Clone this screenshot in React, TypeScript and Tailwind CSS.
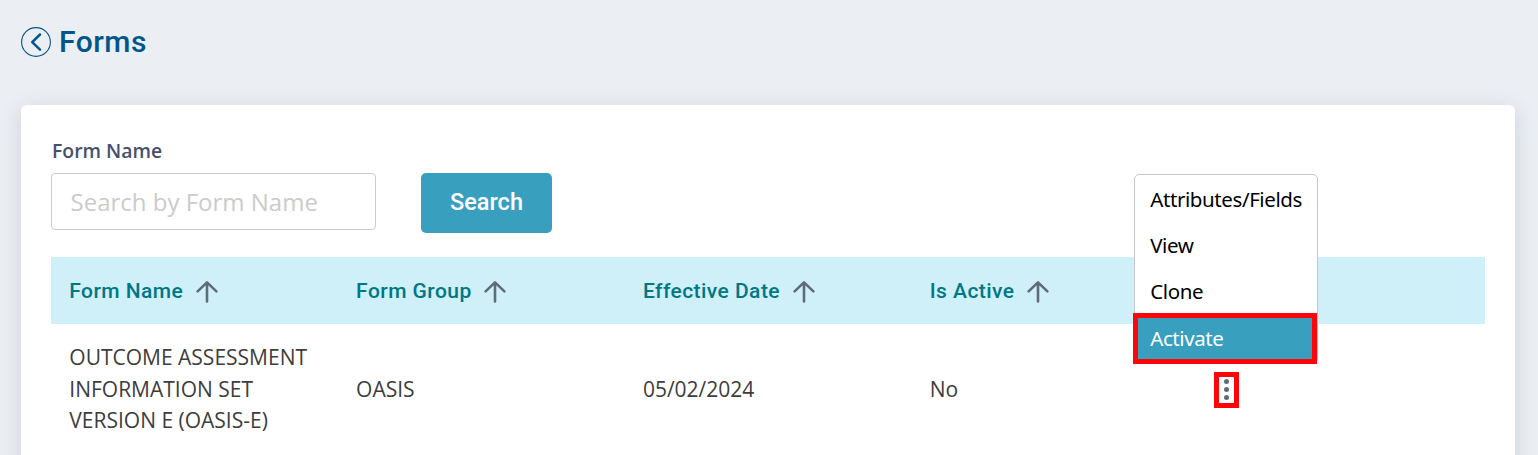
import React, { useState } from 'react'

const columns = ['Form Name', 'Form Group', 'Effective Date', 'Is Active']

const rows = [
    {
        name: 'OUTCOME ASSESSMENT INFORMATION SET VERSION E (OASIS-E)',
        group: 'OASIS',
        date: '05/02/2024',
        active: 'No',
    },
]

const actions = ['Attributes/Fields', 'View', 'Clone', 'Activate']

function SortArrow() {
    return (
        <svg width="24" height="24" viewBox="0 0 24 24" fill="none" stroke="#5f6b75" strokeWidth="2.6" strokeLinecap="round" strokeLinejoin="round">
            <path d="M12 21.5V2.5M2.6 11.4L12 2.4l9.400 9" />
        </svg>
    )
}

function BackIcon() {
    return (
        <svg width="30" height="30" viewBox="0 0 30 30" fill="none" stroke="#00568a" strokeLinecap="round" strokeLinejoin="round">
            <circle cx="15" cy="15" r="14.4" strokeWidth="1.1" />
            <path d="M19 7.500L11.200 15.200L19 22.700" strokeWidth="2.5" />
        </svg>
    )
}

function ActionMenu() {
    return (
        <div className="absolute bottom-[44px] left-[-80px] w-[184px] h-[190px] rounded-[5px] border border-[#c4c8ca] bg-white font-['Noto_Sans','Open_Sans',sans-serif] text-[20.5px] text-black">
            {actions.map((item) => (
                <button
                    key={item}
                    type="button"
                    className={
                        item === 'Activate'
                            ? 'flex h-[51px] w-[184px] -ml-[2px] items-center border-[5px] border-[#ff0509] bg-[#389fbf] pl-3 text-white'
                            : 'flex h-[46px] w-full items-center pl-[15px] pt-1'
                    }
                >
                    <span className="whitespace-nowrap tracking-[-0.4px]">{item}</span>
                </button>
            ))}
        </div>
    )
}

export default function App() {
    const [search, setSearch] = useState('')

    return (
        <div className="h-[455px] overflow-hidden bg-[#ebeef3] px-[21px] font-['Open_Sans',sans-serif]">
            <div className="flex h-[105px] items-start gap-[8px] pt-[27px]">
                <BackIcon />
                <h1 className="font-['Roboto',sans-serif] text-[30px] leading-[30px] font-medium tracking-[0.5px] text-[#00568a]">Forms</h1>
            </div>
            <div className="mr-[2px] h-[400px] rounded-md bg-white px-[30px] pt-[31px] shadow-[0_5px_20px_rgba(100,130,140,0.24)]">
                <form className="flex items-end gap-[45px]" onSubmit={(e) => e.preventDefault()}>
                    <div className="flex flex-col">
                        <label htmlFor="formName" className="h-[37px] pl-px text-[19.4px] leading-[30px] font-semibold text-[#46506e]">Form Name</label>
                        <input
                            id="formName"
                            type="text"
                            value={search}
                            placeholder="Search by Form Name"
                            onChange={(e) => setSearch(e.target.value)}
                            className="mb-[3px] h-[57px] w-[325px] rounded border border-[#c9cbcc] px-[18.5px] text-[24px] outline-none placeholder:text-[#cbcbcb]"
                        />
                    </div>
                    <button
                        type="submit"
                        className="h-[60px] w-[131px] rounded-[5px] bg-[#389fbf] font-['Roboto',sans-serif] text-[23.5px] font-medium text-white"
                    >Search</button>
                </form>
                <div className="mt-6 grid h-[67px] grid-cols-5 items-center bg-[#cfeff9] font-['Roboto',sans-serif] text-[21px] font-medium tracking-[0.45px] text-[#007784]">
                    {columns.map((column) => (
                        <div key={column} className="flex items-center gap-[11.5px] pl-[18.3px]">
                            <span className="pt-[2px]">{column}</span>
                            <span className="pt-[3px]"><SortArrow /></span>
                        </div>
                    ))}
                </div>
                {rows.map((row) => (
                    <div key={row.name} className="grid grid-cols-5 items-center py-[18px] text-[21px] leading-[31.5px] text-[#3d3d3d]">
                        <div className="px-[18.3px]">{row.name}</div>
                        <div className="px-[18.3px]">{row.group}</div>
                        <div className="px-[18.3px]">{row.date}</div>
                        <div className="px-[18.3px]">{row.active}</div>
                        <div className="flex pl-[16px]">
                            <div className="relative mt-px h-[36px] w-[25px]">
                                <button type="button" className="flex h-full w-full flex-col items-center justify-center gap-[3px] border-[5px] border-[#ff0509] bg-white">
                                    <span className="size-[5px] rounded-full bg-[#5f6b75]" />
                                    <span className="size-[5px] rounded-full bg-[#5f6b75]" />
                                    <span className="size-[5px] rounded-full bg-[#5f6b75]" />
                                </button>
                                <ActionMenu />
                            </div>
                        </div>
                    </div>
                ))}
            </div>
        </div>
    )
}
